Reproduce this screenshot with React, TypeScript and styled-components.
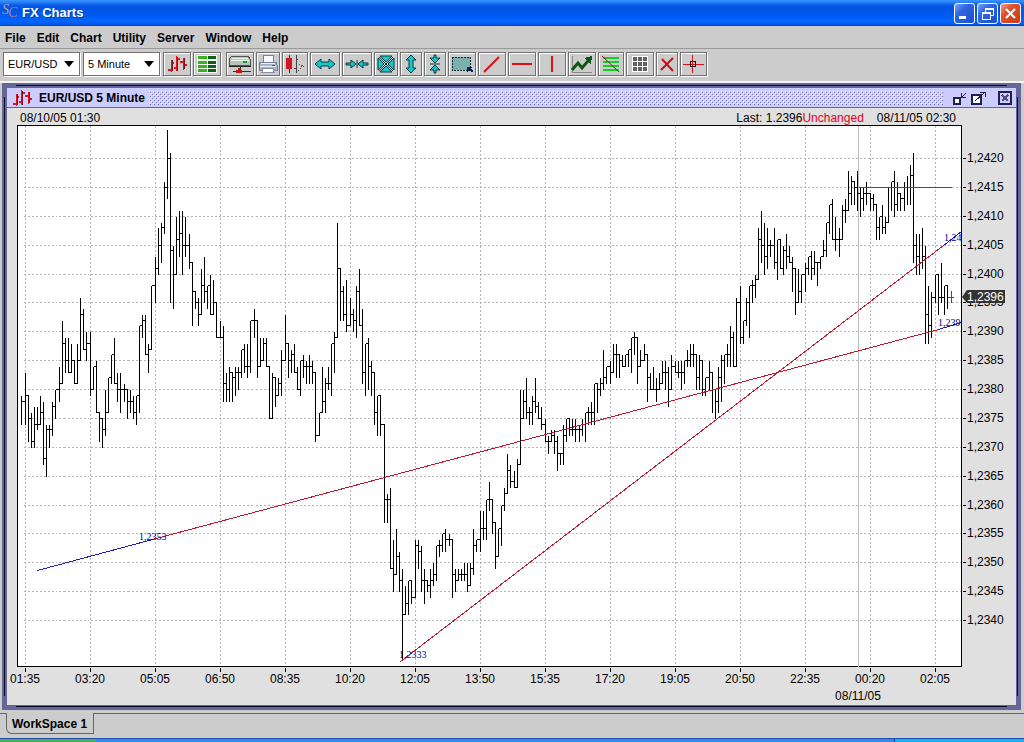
import React from "react";
import styled, { createGlobalStyle } from "styled-components";

const GlobalStyle = createGlobalStyle`
  * { box-sizing: border-box; }
  body {
    margin: 0;
    background: #cccccc;
    color: #000;
    font: 12px/16px "Liberation Sans", Arial, sans-serif;
  }
  button, select { font: inherit; color: inherit; margin: 0; }
`;

/* ---------- Application window ---------- */

const AppWindow = styled.div`
  display: flex;
  flex-direction: column;
  min-height: 100vh;
`;

const TitleBar = styled.header`
  display: flex;
  align-items: center;
  gap: 4px;
  height: 26px;
  padding: 0 3px 0 2px;
  background: linear-gradient(#3a93ff 0, #2a84fb 2px, #0a5ce6 5px, #0054e3 9px, #0058ee 14px, #0066ff 21px, #005bf0 24px, #0040c0 26px);
`;

const AppTitle = styled.h1`
  flex: 1;
  margin: 0;
  font-size: 13px;
  color: #fff;
  text-shadow: 1px 1px 0 #0a3a9c;
`;

const CaptionButtons = styled.div`
  display: flex;
  gap: 2px;
`;

const CaptionButton = styled.button<{ $danger?: boolean }>`
  display: grid;
  width: 21px;
  height: 21px;
  padding: 0;
  border: 1px solid #fff;
  border-radius: 3px;
  background: ${(p) =>
    p.$danger
      ? "linear-gradient(135deg, #f0a088, #e0512c 35%, #c83a10)"
      : "linear-gradient(135deg, #7ba4f4, #2f66e4 35%, #1c4fc8)"};
`;

const MenuBar = styled.nav`
  display: flex;
  gap: 11px;
  height: 23px;
  padding: 4px 5px 0;
  border-bottom: 1px solid #999;
`;

const MenuItem = styled.button`
  padding: 0;
  border: 0;
  height: 16px;
  background: none;
  font-weight: bold;
`;

const Toolbar = styled.div`
  display: flex;
  gap: 2px;
  height: 34px;
  padding: 3px 3px 0;
  border-bottom: 2px solid #f4f4f4;
`;

const ToolGroup = styled.div`
  display: flex;
  gap: 2px;
  margin-right: 3px;
`;

const ToolButton = styled.button<{ $width: number }>`
  display: grid;
  place-items: center;
  width: ${(p) => p.$width}px;
  height: 24px;
  padding: 0;
  border: 1px solid #707070;
  background: #cccccc;
  box-shadow: inset 1px 1px 0 #fff, 1px 1px 0 #fff;
`;

const SelectBox = styled.label`
  position: relative;
  width: 77px;
  height: 24px;
  margin-right: 1px;
  border: 1px solid #707070;
  background: #fff;
  box-shadow: 1px 1px 0 #fff;

  select {
    appearance: none;
    width: 100%;
    height: 100%;
    padding: 0 0 0 4px;
    border: 0;
    border-radius: 0;
    background: transparent;
    font-size: 11px;
  }
  svg {
    position: absolute;
    top: 8px;
    right: 5px;
    pointer-events: none;
  }
`;

/* ---------- Chart frame ---------- */

const Desktop = styled.main`
  padding: 0 3px 3px 2px;
`;

const line = "linear-gradient(#080828, #080828)";
const ChartFrame = styled.section`
  padding: 5px;
  background:
    ${line} 14px 2px / calc(100% - 28px) 1px no-repeat,
    ${line} 14px calc(100% - 3px) / calc(100% - 28px) 1px no-repeat,
    ${line} 2px 14px / 1px calc(100% - 28px) no-repeat,
    ${line} calc(100% - 3px) 14px / 1px calc(100% - 28px) no-repeat,
    #666699;
`;

const FrameTitle = styled.div`
  display: flex;
  align-items: center;
  height: 20px;
  padding: 0 4px 0 5px;
  border-bottom: 1px solid #666699;
  background: #ccccff;
`;

const FrameName = styled.h2`
  margin: 0 4px 0 7px;
  font-size: 12px;
`;

const dot = (c: string) => `conic-gradient(from 270deg at 1px 1px, ${c} 25%, transparent 0)`;
const Grip = styled.div`
  flex: 1;
  height: 14px;
  margin-right: 6px;
  background:
    ${dot("#fff")} 0 0 / 4px 4px,
    ${dot("#fff")} 2px 2px / 4px 4px,
    ${dot("#7474ac")} 1px 1px / 4px 4px,
    ${dot("#7474ac")} 3px 3px / 4px 4px;
`;

const FrameButton = styled.button<{ $apart?: boolean }>`
  display: grid;
  margin-left: ${(p) => (p.$apart ? 12 : 4)}px;
  padding: 0;
  border: 0;
  background: none;
`;

const ChartPane = styled.div`
  background: #e0e0e0;
`;

const InfoRow = styled.div`
  display: flex;
  height: 17px;
  padding: 2px 60px 0 13px;
`;

const LastPrice = styled.span`
  margin: 0 13px 0 auto;
`;

const Change = styled.span`
  color: #e00020;
`;

const ChartSvg = styled.svg`
  display: block;
  width: 100%;
  height: auto;
  font-size: 12px;
`;

const LineLabels = styled.g`
  fill: #000090;
  font-family: "Liberation Serif", serif;
  font-size: 10px;
`;

/* ---------- Footer ---------- */

const WorkspaceTabs = styled.footer`
  display: flex;
  flex: 1;
  min-height: 25px;

  &::before { content: ""; width: 6px; border-top: 1px solid #666; }
  &::after { content: ""; flex: 1; border-top: 1px solid #666; }
`;

const WorkspaceTab = styled.button`
  height: 21px;
  padding: 2px 6px 0 5px;
  border: 1px solid #666;
  border-top: 0;
  border-bottom-left-radius: 6px;
  background: #cccccc;
  font-weight: bold;
`;

const TaskStrip = styled.div`
  display: flex;
  height: 4px;
  border-top: 1px solid #1c4fae;
  background: #3a86ee;

  &::before { content: ""; width: 96px; background: #4fae55; }
  &::after { content: ""; width: 129px; margin-left: auto; border-left: 1px solid #0c3c90; background: #18b0f4; }
`;

/* ---------- Icons ---------- */

const Icon = ({ w = 22, h = 20, children }: { w?: number; h?: number; children: React.ReactNode }) => (
  <svg width={w} height={h} viewBox={`0 0 ${w} ${h}`} fill="none" shapeRendering="crispEdges" aria-hidden="true">
    {children}
  </svg>
);

const BarsIcon = () => (
  <Icon w={20} h={18}>
    <path d="M5 5h1v11H5zM10 2h1v14h-1zM17 3h1v11h-1z" fill="#801018" />
    <path d="M4 5h1v12H4zM1 14h3v2H1zM6 7h1v2H6zM9 1h1v15H9zM7 12h2v2H7zM11 3h2v2h-2zM16 3h1v12h-1zM13 6h3v2h-3zM18 9h2v2h-2z" fill="#dc1420" />
  </Icon>
);

const QuotesIcon = () => (
  <Icon>
    <path d="M1 1h20v18H1z" fill="#f4f4f4" />
    {[2, 7, 11, 15].map((y) => (
      <g key={y}>
        <path d={`M2 ${y}h9v3H2z`} fill="#38b020" />
        <path d={`M12 ${y}h8v3h-8z`} fill="#0c6018" />
      </g>
    ))}
  </Icon>
);

const ServerIcon = () => (
  <Icon w={24}>
    <path d="M4 2h16l2 3v6H1V5z" fill="#b8c4b8" stroke="#555" />
    <path d="M4 4h16M3 6h18" stroke="#eef4ee" />
    <path d="M15 8h4" stroke="#10a030" strokeWidth="2" />
    <path d="M1 12h22" stroke="#222" />
    <path d="M12 12v4M5 17h18" stroke="#333" />
    <path d="M8 16h6v3H8zM10 14h2v3h-2z" fill="#c01818" />
  </Icon>
);

const PrinterIcon = () => (
  <Icon w={20}>
    <path d="M6 1h9l1 7H5z" fill="#f8f8ff" stroke="#7880a0" />
    <path d="M2 8h16l1 3v5H1v-5z" fill="#a8b2c8" stroke="#7880a0" />
    <path d="M3 9h14M2 12h16" stroke="#eef0f8" />
    <path d="M5 14h10l1 4H4z" fill="#fff" stroke="#8890a8" />
    <path d="M14 11h3" stroke="#3858a0" />
  </Icon>
);

const CandleIcon = () => (
  <Icon>
    <path d="M5 1v18" stroke="#701010" />
    <path d="M2 4h6v11H2z" fill="#d01820" />
    <path d="M12 1v18M10 14h2M12 5h2" stroke="#444" />
    <path d="M14 16h1v-1h1v-1h1v-2h1v-1h1v-2M15 10h1v1h2v1h1v1" stroke="#555" strokeDasharray="1 2" />
  </Icon>
);

const cyan = { fill: "#18c8c8", stroke: "#063c40", shapeRendering: "auto" as const };

const WidenIcon = () => (
  <Icon w={22} h={12}>
    <path d="M1 6l6-5v3h8V1l6 5-6 5V8H7v3z" {...cyan} />
  </Icon>
);
const NarrowIcon = () => (
  <Icon w={24} h={12}>
    <path d="M1 5h5V2l5 4-5 4V7H1zM23 5h-5V2l-5 4 5 4V7h5zM12 2v8" {...cyan} />
  </Icon>
);
const FitIcon = () => (
  <Icon w={18} h={18}>
    <path d="M3 1h12L9 7zM3 17h12l-6-6zM1 3v12l6-6zM17 3v12l-6-6z" {...cyan} />
    <path d="M2 2l14 14M16 2L2 16" stroke="#063c40" shapeRendering="auto" />
  </Icon>
);
const TallerIcon = () => (
  <Icon w={14} h={20}>
    <path d="M7 1l5 5H9v8h3l-5 5-5-5h3V6H2z" {...cyan} />
  </Icon>
);
const ShorterIcon = () => (
  <Icon w={14} h={20}>
    <path d="M6 1v3H2l5 5 5-5H8V1zM6 19v-3H2l5-5 5 5H8v3zM2 10h10" {...cyan} />
  </Icon>
);
const ZoomAreaIcon = () => (
  <Icon w={24} h={18}>
    <path d="M2 2h18v13H2z" fill="#78b0b0" stroke="#102828" strokeDasharray="2 1" />
    <path d="M17 12h5l-1 1 2 3-1 1-3-2-2 2z" fill="#0c2058" />
  </Icon>
);
const TrendIcon = () => (
  <Icon w={20} h={18}>
    <path d="M2 17L17 2" stroke="#e01018" strokeWidth="2" shapeRendering="auto" />
  </Icon>
);
const HorizontalIcon = () => (
  <Icon w={20} h={4}>
    <path d="M0 1h20v2H0z" fill="#e01018" />
  </Icon>
);
const VerticalIcon = () => (
  <Icon w={4} h={16}>
    <path d="M1 0h2v16H1z" fill="#e01018" />
  </Icon>
);
const StudyIcon = () => (
  <Icon w={24} h={20}>
    <path d="M2 2v16h20" stroke="#888" />
    <path d="M2 16l6-7 4 5 6-7" stroke="#0c5814" strokeWidth="3" shapeRendering="auto" />
    <path d="M14 4l8-2-1 8z" fill="#0c5814" />
  </Icon>
);
const FibIcon = () => (
  <Icon w={20} h={20}>
    <path d="M2 3h16v2H2zM2 7h16v2H2zM2 11h16v2H2zM2 15h16v2H2z" fill="#10d028" />
    <path d="M1 2l17 16" stroke="#802010" shapeRendering="auto" />
  </Icon>
);
const GridIcon = () => (
  <Icon w={18} h={18}>
    <path d="M1 1h16v16H1z" fill="#fff" />
    {[2, 7, 12].map((y) => [2, 7, 12].map((x) => <path key={`${x}-${y}`} d={`M${x} ${y}h4v4h-4z`} fill="#606060" />))}
  </Icon>
);
const DeleteIcon = () => (
  <Icon w={18} h={18}>
    <path d="M4 4l11 12M15 3L3 15" stroke="#c81018" strokeWidth="2" shapeRendering="auto" />
  </Icon>
);
const CrosshairIcon = () => (
  <Icon w={23} h={20}>
    <path d="M1 10h21v1H1zM10 1h1v18h-1z" fill="#d81018" />
    <path d="M8 7h6v1H8zM8 12h6v1H8zM8 7h1v6H8zM13 7h1v6h-1z" fill="#111" />
  </Icon>
);

const TOOLS: { name: string; width: number; icon: React.ReactNode }[] = [
  { name: "Server", width: 28, icon: <ServerIcon /> },
  { name: "Print", width: 24, icon: <PrinterIcon /> },
  { name: "Chart style", width: 26, icon: <CandleIcon /> },
  { name: "Widen", width: 30, icon: <WidenIcon /> },
  { name: "Narrow", width: 30, icon: <NarrowIcon /> },
  { name: "Fit", width: 24, icon: <FitIcon /> },
  { name: "Taller", width: 22, icon: <TallerIcon /> },
  { name: "Shorter", width: 22, icon: <ShorterIcon /> },
  { name: "Zoom area", width: 28, icon: <ZoomAreaIcon /> },
  { name: "Trend line", width: 28, icon: <TrendIcon /> },
  { name: "Horizontal line", width: 28, icon: <HorizontalIcon /> },
  { name: "Vertical line", width: 28, icon: <VerticalIcon /> },
  { name: "Studies", width: 28, icon: <StudyIcon /> },
  { name: "Retracement", width: 26, icon: <FibIcon /> },
  { name: "Grid", width: 28, icon: <GridIcon /> },
  { name: "Delete", width: 22, icon: <DeleteIcon /> },
  { name: "Crosshair", width: 27, icon: <CrosshairIcon /> },
];

/* ---------- Price data: high, low, close in pips above 1.2300, one bar per five minutes ---------- */

const BARS = `
79 74 78,83 74 79,79 71 75,76 70 71,77 70 74,77 73 74,79 74 76,78 67 68,74 65 73,74 70 73,
78 72 77,80 75 80,84 78 81,92 81 88,89 83 85,89 83 83,88 83 85,85 81 81,88 81 85,96 85 93,
94 87 87,90 85 88,90 79 80,84 80 84,85 76 76,76 71 75,75 70 73,80 72 76,82 76 82,86 81 86,
89 81 81,83 78 80,83 76 80,81 78 80,80 75 78,80 76 78,79 75 76,79 74 79,91 76 91,93 89 92,
93 86 86,88 83 87,98 87 98,103 95 101,108 100 105,109 102 108,116 107 115,125 113 120,121 95 104,105 94 100,
110 100 106,111 103 107,111 100 105,110 103 105,107 101 102,102 91 97,97 94 95,96 91 93,101 93 98,103 95 97,
98 94 98,100 93 93,99 93 95,95 89 89,92 89 89,91 78 81,83 78 80,84 78 83,83 78 82,84 79 83,
84 80 83,87 82 87,88 83 84,88 82 84,92 83 92,94 89 92,92 82 84,89 84 85,89 85 88,89 84 84,
84 75 75,83 75 82,82 77 79,82 79 81,87 79 85,93 85 88,88 82 85,87 83 86,88 83 83,84 80 80,
85 79 85,86 82 84,85 81 84,86 81 84,85 81 83,83 71 72,76 72 76,84 76 78,82 76 81,84 80 81,
88 79 88,90 83 89,109 89 101,101 92 97,98 92 93,99 90 91,96 91 93,94 90 92,98 89 97,101 91 91,
94 81 83,88 79 88,89 80 84,85 79 83,83 74 76,79 72 79,79 72 74,74 57 61,62 57 61,63 49 49,
54 45 48,56 48 51,52 45 47,49 33 41,46 41 43,47 41 47,47 43 44,54 44 53,54 49 52,53 45 47,
49 43 47,47 45 46,49 44 47,50 46 48,53 47 53,54 51 53,55 52 55,56 52 54,55 53 54,54 44 48,
49 45 47,49 47 48,49 47 48,50 47 48,50 45 46,50 46 49,56 48 53,54 52 54,59 52 56,59 54 56,
61 54 61,64 59 61,61 55 57,57 49 51,56 51 56,60 53 60,63 59 62,69 62 66,67 63 64,66 63 63,
68 63 67,80 67 75,80 75 78,82 75 76,77 74 76,79 74 78,82 76 77,78 75 75,77 73 74,75 71 71,
72 69 71,73 71 72,73 69 71,72 66 69,69 67 69,74 67 72,75 71 75,75 72 73,75 72 73,75 71 73,
74 71 73,75 72 74,76 71 76,77 74 76,78 74 76,81 74 81,81 76 80,82 79 81,87 80 82,84 81 84,
85 81 83,88 83 86,88 82 86,86 82 85,86 84 84,86 84 86,87 84 87,89 83 89,90 86 89,89 81 84,
87 84 85,88 85 86,86 78 82,83 80 80,84 80 80,82 78 80,83 80 81,85 81 83,85 80 83,84 77 80,
86 80 84,85 83 83,85 82 83,85 80 83,85 81 85,87 84 85,88 84 86,88 84 86,86 80 82,86 80 85,
85 79 80,82 79 82,85 80 83,83 76 80,80 75 78,84 76 82,86 78 85,86 81 86,88 84 86,91 84 89,
90 84 84,96 84 95,98 88 89,92 88 92,96 91 95,98 89 98,99 95 98,100 96 99,108 99 106,111 102 105,
109 100 103,108 101 105,106 103 105,108 101 102,106 99 106,106 101 101,105 100 104,107 101 103,105 102 102,103 97 101,
101 93 95,101 95 97,100 95 100,102 97 101,103 100 103,104 99 101,104 100 102,102 98 102,103 101 103,106 103 104,
109 103 109,112 107 112,113 106 106,110 104 106,108 103 106,112 106 111,113 109 111,118 111 114,117 112 116,116 112 115,
118 111 114,115 110 113,115 111 114,116 112 114,114 111 113,114 111 112,112 106 108,110 106 110,112 107 108,110 107 109,
115 109 115,116 111 116,118 110 112,116 111 114,114 111 113,116 111 115,117 112 115,119 112 117,121 102 105,107 100 103,
107 100 102,108 101 103,105 88 93,98 88 91,97 89 96,100 95 100,100 93 96,102 95 96,98 93 98,98 94 96`
  .trim()
  .split(",")
  .map((bar) => bar.trim().split(" ").map(Number));

const PLOT = { left: 10, right: 954, bottom: 541 };
const TIMES = ["01:35", "03:20", "05:05", "06:50", "08:35", "10:20", "12:05", "13:50", "15:35", "17:20", "19:05", "20:50", "22:35", "00:20", "02:05"];
const PRICES = Array.from({ length: 17 }, (_, i) => 120 - i * 5);

const barX = (i: number) => Math.floor(18 + ((i - 1) * 65) / 21);
const priceY = (pips: number) => Math.round(33 + (120 - pips) * 5.775);
const label = (pips: number) => `1,${2300 + pips}`;

const bars = BARS.map(([high, low, close], i) => {
  const x = barX(i);
  return `M${x} ${priceY(high)}V${priceY(low)}M${x} ${priceY(close)}H${barX(i + 1)}`;
}).join("");

const PriceChart = () => (
  <ChartSvg viewBox="0 0 1009 580" role="img" aria-label="EUR/USD five minute bar chart">
    <defs>
      <clipPath id="plot-area">
        <rect x={PLOT.left} y="0" width={PLOT.right - PLOT.left} height={PLOT.bottom} />
      </clipPath>
    </defs>
    <rect x={PLOT.left} y="0" width="944" height="541" fill="#fff" />
    <g transform="translate(0.5 0.5)" fill="none" shapeRendering="crispEdges">
      <path d="M10 0H954V541H10Z" stroke="#000" />
      <g stroke="#b4b4b4" strokeDasharray="2 2">
        {PRICES.map((p) => <path key={p} d={`M16 ${priceY(p)}H953`} />)}
        {TIMES.map((t, i) => <path key={t} d={`M${18 + i * 65} 0V540`} />)}
      </g>
      <path d="M851 0V541" stroke="#bbb" />
      <g stroke="#000">
        {PRICES.map((p) => <path key={p} d={`M955 ${priceY(p)}h3`} />)}
        {TIMES.map((t, i) => <path key={t} d={`M${18 + i * 65} 542v4`} />)}
        <path d={bars} />
      </g>
    </g>
    <g fill="#d01424" shapeRendering="crispEdges">
      <rect x="852" y="62" width="93" height="1" />
      <rect x="944" y="166" width="1" height="12" />
      <rect x="941" y="172" width="6" height="1" />
    </g>
    <g transform="translate(0.5 0.5)" fill="none" shapeRendering="crispEdges">
      <path d="M145 414L931 204M393 536L936 120" stroke="#c4142c" />
      <path d="M30 445L145 414M931 204L954 197M936 120L954 106" stroke="#1c1cc8" />
    </g>
    <LineLabels clipPath="url(#plot-area)">
      <text x="132" y="415">1,2353</text>
      <text x="392" y="533">1,2333</text>
      <text x="937" y="116">1,2406</text>
      <text x="931" y="201">1,2391</text>
    </LineLabels>
    {PRICES.map((p) => <text key={p} x="960" y={priceY(p) + 4}>{label(p)}</text>)}
    <path d="M955 172l5-7h38v13h-38z" fill="#333" />
    <text x="960" y="176" fill="#fff">1,2396</text>
    <g textAnchor="middle">
      {TIMES.map((t, i) => <text key={t} x={18 + i * 65} y="558">{t}</text>)}
      <text x="851" y="575">08/11/05</text>
    </g>
  </ChartSvg>
);

const MENUS = ["File", "Edit", "Chart", "Utility", "Server", "Window", "Help"];

const Dropdown = ({ name, value }: { name: string; value: string }) => (
  <SelectBox>
    <select aria-label={name} defaultValue={value}>
      <option>{value}</option>
    </select>
    <svg width="10" height="6" viewBox="0 0 10 6" aria-hidden="true">
      <path d="M0 0h10L5 6z" fill="#000" />
    </svg>
  </SelectBox>
);

export default function App() {
  return (
    <AppWindow>
      <GlobalStyle />
      <TitleBar>
        <svg width="16" height="22" viewBox="0 0 16 22" aria-hidden="true" fontFamily="Liberation Serif, serif" fontStyle="italic" fontSize="14">
          <text x="0" y="12" fill="#a4a4b8">S</text>
          <text x="6" y="15" fill="#b07c88">C</text>
        </svg>
        <AppTitle>FX Charts</AppTitle>
        <CaptionButtons>
          <CaptionButton aria-label="Minimize">
            <Icon w={19} h={19}><path d="M4 12h7v3H4z" fill="#fff" /></Icon>
          </CaptionButton>
          <CaptionButton aria-label="Restore">
            <Icon w={19} h={19}><path d="M7 8V4h8v7h-3M7 5h8M4 8h8v7H4zM4 9h8" stroke="#fff" /></Icon>
          </CaptionButton>
          <CaptionButton aria-label="Close" $danger>
            <Icon w={19} h={19}><path d="M5 5l9 9M14 5l-9 9" stroke="#fff" strokeWidth="2" shapeRendering="auto" /></Icon>
          </CaptionButton>
        </CaptionButtons>
      </TitleBar>
      <MenuBar>
        {MENUS.map((m) => <MenuItem key={m}>{m}</MenuItem>)}
      </MenuBar>
      <Toolbar>
        <Dropdown name="Symbol" value="EUR/USD" />
        <Dropdown name="Interval" value="5 Minute" />
        <ToolGroup>
          <ToolButton $width={28} aria-label="New chart"><BarsIcon /></ToolButton>
          <ToolButton $width={28} aria-label="Quotes"><QuotesIcon /></ToolButton>
        </ToolGroup>
        {TOOLS.map((t) => (
          <ToolButton key={t.name} $width={t.width} aria-label={t.name}>{t.icon}</ToolButton>
        ))}
      </Toolbar>
      <Desktop>
        <ChartFrame>
          <FrameTitle>
            <BarsIcon />
            <FrameName>EUR/USD 5 Minute</FrameName>
            <Grip />
            <FrameButton aria-label="Iconify">
              <Icon w={14} h={14}>
                <path d="M1 7h6v6H1z" fill="#fff" stroke="#202048" strokeWidth="2" />
                <path d="M8 2v4h5M9 6l4-4" stroke="#202048" />
              </Icon>
            </FrameButton>
            <FrameButton aria-label="Maximize">
              <Icon w={15} h={14}>
                <path d="M1 4h9v9H1z" fill="#fff" stroke="#202048" strokeWidth="2" />
                <path d="M4 10l9-8M9 1h5v5" stroke="#202048" />
              </Icon>
            </FrameButton>
            <FrameButton aria-label="Close chart" $apart>
              <Icon w={14} h={14}>
                <path d="M1 1h12v12H1z" stroke="#202048" strokeWidth="2" />
                <path d="M4 4l6 6M10 4l-6 6" stroke="#505080" strokeWidth="2" />
              </Icon>
            </FrameButton>
          </FrameTitle>
          <ChartPane>
            <InfoRow>
              <span>08/10/05 01:30</span>
              <LastPrice>Last: 1.2396<Change>Unchanged</Change></LastPrice>
              <span>08/11/05 02:30</span>
            </InfoRow>
            <PriceChart />
          </ChartPane>
        </ChartFrame>
      </Desktop>
      <WorkspaceTabs>
        <WorkspaceTab>WorkSpace 1</WorkspaceTab>
      </WorkspaceTabs>
      <TaskStrip />
    </AppWindow>
  );
}
